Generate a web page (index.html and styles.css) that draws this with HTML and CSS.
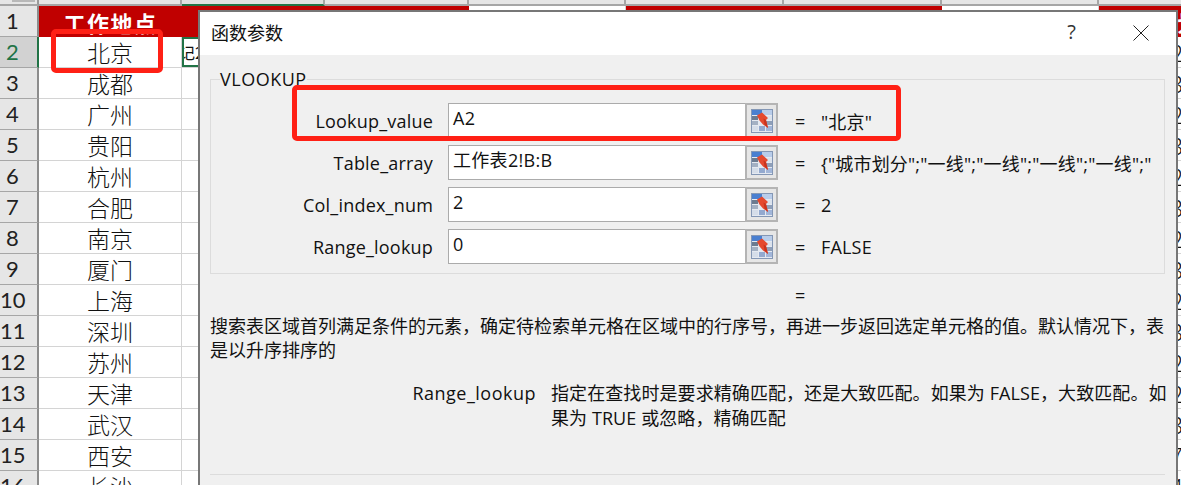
FILE: index.html
```html
<!DOCTYPE html>
<html lang="zh-CN">
<head>
<meta charset="utf-8">
<title>函数参数</title>
<link rel="stylesheet" href="styles.css">
</head>
<body>
<svg class="defs" width="0" height="0" aria-hidden="true">
  <symbol id="refedit" viewBox="0 0 22 24">
    <rect x="0" y="0" width="22" height="24" fill="#8497b5"/>
    <rect x="1" y="1" width="20" height="22" fill="#e4e9f1"/>
    <rect x="1" y="1" width="10" height="5" fill="#4a7fd0"/>
    <rect x="11" y="1" width="10" height="5" fill="#b9cdea"/>
    <rect x="1" y="7" width="6" height="4" fill="#6c7b90"/>
    <rect x="8" y="7" width="6" height="4" fill="#c9d2df"/>
    <rect x="15" y="7" width="6" height="4" fill="#dbe2ec"/>
    <rect x="1" y="12" width="6" height="4" fill="#a3b0c3"/>
    <rect x="15" y="12" width="6" height="4" fill="#8f9fb8"/>
    <rect x="1" y="17" width="6" height="5" fill="#d5dde9"/>
    <rect x="8" y="17" width="6" height="5" fill="#93a9cf"/>
    <rect x="15" y="17" width="6" height="5" fill="#a2b6d9"/>
    <path d="M6 6.500 L11 3.500 L17 9 L15 11 L17 19 L12 15.500 L8.500 11.500 Z" fill="#e5492f"/>
    <path d="M12.500 9.500 L15 11 L17 19 L13.500 15.500 Z" fill="#c9341f"/>
  </symbol>
</svg>

<table class="sheet">
  <colgroup>
    <col class="w-head"><col class="w-a"><col class="w-a"><col class="w-c"><col class="w-d"><col class="w-e"><col class="w-e"><col class="w-d"><col class="w-d">
  </colgroup>
  <tr class="col-heads">
    <th class="corner"><span class="corner-mark"></span></th>
    <th></th><th class="active"></th><th></th><th></th><th></th><th></th><th></th><th></th>
  </tr>
  <tr>
    <th class="num">1</th>
    <td class="title">工作地点</td><td class="title"></td><td class="title"></td><td></td><td class="title"></td><td class="title"></td><td></td><td class="title">城市划分</td>
  </tr>
  <tr><th class="num current">2</th><td>北京</td><td class="selected"><span class="formula">记2</span></td><td colspan="5"></td><td>2</td></tr>
  <tr><th class="num">3</th><td>成都</td><td></td><td colspan="5"></td><td>3</td></tr>
  <tr><th class="num">4</th><td>广州</td><td></td><td colspan="5"></td><td>2</td></tr>
  <tr><th class="num">5</th><td>贵阳</td><td></td><td colspan="5"></td><td>3</td></tr>
  <tr><th class="num">6</th><td>杭州</td><td></td><td colspan="5"></td><td>2</td></tr>
  <tr><th class="num">7</th><td>合肥</td><td></td><td colspan="5"></td><td>3</td></tr>
  <tr><th class="num">8</th><td>南京</td><td></td><td colspan="5"></td><td>2</td></tr>
  <tr><th class="num">9</th><td>厦门</td><td></td><td colspan="5"></td><td>3</td></tr>
  <tr><th class="num">10</th><td>上海</td><td></td><td colspan="5"></td><td>2</td></tr>
  <tr><th class="num">11</th><td>深圳</td><td></td><td colspan="5"></td><td>3</td></tr>
  <tr><th class="num">12</th><td>苏州</td><td></td><td colspan="5"></td><td>2</td></tr>
  <tr><th class="num">13</th><td>天津</td><td></td><td colspan="5"></td><td>2</td></tr>
  <tr><th class="num">14</th><td>武汉</td><td></td><td colspan="5"></td><td>3</td></tr>
  <tr><th class="num">15</th><td>西安</td><td></td><td colspan="5"></td><td>7</td></tr>
  <tr><th class="num">16</th><td>长沙</td><td></td><td colspan="5"></td><td>4</td></tr>
</table>

<section class="dialog">
  <header class="titlebar">
    <h1 class="dialog-title">函数参数</h1>
    <span class="help">?</span>
    <svg class="close" width="16" height="16" viewBox="0 0 16 16" aria-hidden="true"><path d="M0.500 0.500 L15.500 15.500 M15.500 0.500 L0.500 15.500" stroke="#222" stroke-width="1" fill="none"/></svg>
  </header>
  <div class="dialog-body">
    <fieldset class="args">
      <legend class="args-name">VLOOKUP</legend>
      <div class="arg">
        <label class="arg-label">Lookup_value</label>
        <div class="arg-input"><span class="field">A2</span><span class="ref-btn"><svg width="22" height="24"><use href="#refedit"/></svg></span></div>
        <span class="eq">=</span><span class="arg-result">"北京"</span>
      </div>
      <div class="arg">
        <label class="arg-label">Table_array</label>
        <div class="arg-input"><span class="field">工作表2!B:B</span><span class="ref-btn"><svg width="22" height="24"><use href="#refedit"/></svg></span></div>
        <span class="eq">=</span><span class="arg-result">{"城市划分";"一线";"一线";"一线";"一线";"</span>
      </div>
      <div class="arg">
        <label class="arg-label">Col_index_num</label>
        <div class="arg-input"><span class="field">2</span><span class="ref-btn"><svg width="22" height="24"><use href="#refedit"/></svg></span></div>
        <span class="eq">=</span><span class="arg-result">2</span>
      </div>
      <div class="arg">
        <label class="arg-label">Range_lookup</label>
        <div class="arg-input"><span class="field">0</span><span class="ref-btn"><svg width="22" height="24"><use href="#refedit"/></svg></span></div>
        <span class="eq">=</span><span class="arg-result">FALSE</span>
      </div>
    </fieldset>
    <div class="total-eq">=</div>
    <p class="summary">搜索表区域首列满足条件的元素，确定待检索单元格在区域中的行序号，再进一步返回选定单元格的值。默认情况下，表<br>是以升序排序的</p>
    <div class="arg-help">
      <span class="arg-help-name">Range_lookup</span>
      <p class="arg-help-text">指定在查找时是要求精确匹配，还是大致匹配。如果为 FALSE，大致匹配。如<br>果为 TRUE 或忽略，精确匹配</p>
    </div>
    <div class="separator"></div>
  </div>
</section>

<div class="mark mark-cell"></div>
<div class="mark mark-arg"></div>
</body>
</html>
```

FILE: styles.css
```css
html, body {
  margin: 0;
  height: 485px;
  overflow: hidden;
  background: #fff;
}

.defs { position: absolute; }

/* Worksheet */
.sheet {
  border-collapse: separate;
  border-spacing: 0;
  table-layout: fixed;
  width: 1256px;
  font-family: "Noto Sans CJK SC", sans-serif;
  font-weight: 300;
  color: #111;
}
.sheet col, .sheet th, .sheet td { box-sizing: border-box; }
.w-head { width: 39px; }
.w-a { width: 143px; }
.w-c { width: 144px; }
.w-d { width: 157px; }
.w-e { width: 158px; }

.sheet tr { height: 31px; }
.sheet td {
  padding: 0;
  height: 31px;
  font-size: 23px;
  line-height: 30px;
  text-align: center;
  white-space: nowrap;
  overflow: hidden;
  border-right: 1px solid #d4d4d4;
  border-bottom: 1px solid #d4d4d4;
}
.sheet tr.col-heads { height: 6px; }
.col-heads th {
  height: 6px;
  padding: 0;
  background: #e6e6e6;
  border-right: 2px solid #a6a6a6;
  border-bottom: 2px solid #a6a6a6;
}
.col-heads th.corner { border-right: 2px solid #9a9a9a; }
.corner-mark {
  display: block;
  width: 23px;
  height: 2px;
  margin: -2px 0 0 12px;
  background: #b8b8b8;
}
.col-heads th.active { border-bottom-color: #217346; background: #e0e0e0; }

.num {
  padding: 0 12px 0 0;
  height: 31px;
  background: #e6e6e6;
  font-family: Lato, sans-serif;
  font-weight: 400;
  font-size: 22px;
  line-height: 30px;
  color: #222;
  text-align: center;
  border-right: 2px solid #8c8c8c;
  border-bottom: 1px solid #a6a6a6;
}
.num.current {
  background: #d2d2d2;
  color: #217346;
  border-right-color: #217346;
}
.sheet td.title {
  background: #c00000;
  color: #fff;
  font-weight: 700;
  font-size: 22px;
  letter-spacing: 1.500px;
  line-height: 30px;
  border-right: 0;
  border-bottom: 0;
}
.sheet td.selected {
  text-align: left;
  box-shadow: inset 0 0 0 2px #217346;
  font-size: 16px;
  font-weight: 400;
}
.formula {
  display: block;
  margin-left: 2px;
  overflow: hidden;
  text-indent: -5px;
}

/* Dialog window */
.dialog {
  position: absolute;
  left: 198px;
  top: 10px;
  width: 976px;
  height: 500px;
  border: 2px solid #777;
  border-bottom: 0;
  background: #f0f0f0;
  font-family: "Open Sans", "Noto Sans CJK SC", sans-serif;
  font-size: 18px;
  color: #111;
}
.titlebar {
  display: flex;
  align-items: center;
  height: 43px;
  background: #fff;
  padding: 0 27px 0 11px;
}
.dialog-title {
  margin: -4px 0 0;
  flex: 1;
  font-size: 18px;
  font-weight: 400;
}
.help {
  font-size: 20px;
  color: #333;
  margin: -4px 57px 0 0;
}
.close { display: block; margin-top: -2px; }

.dialog-body { padding: 0 11px 0 10px; }

.args {
  margin: 14px 0 0;
  padding: 14px 0 9px;
  border: 1px solid #dcdcdc;
  min-width: 0;
}
.args-name {
  margin-left: 9px;
  padding: 0;
  font-size: 18px;
  line-height: 20px;
  letter-spacing: .5px;
}
.arg {
  display: grid;
  grid-template-columns: 222px 330px 27px 1fr;
  align-items: center;
  height: 35px;
  margin-bottom: 7px;
}
.arg:last-child { margin-bottom: 0; }
.arg-label { text-align: right; letter-spacing: .2px; }
.arg-input {
  display: flex;
  grid-column: 2;
  height: 35px;
  margin-left: 15px;
  margin-right: -15px;
}
.field {
  flex: 1;
  box-sizing: border-box;
  background: #fff;
  border: 1px solid #ababab;
  border-right: 0;
  padding: 0 4px;
  line-height: 28px;
  white-space: nowrap;
  letter-spacing: .3px;
}
.ref-btn {
  display: flex;
  align-items: center;
  justify-content: center;
  width: 33px;
  box-sizing: border-box;
  background: #e6e6e6;
  border: 2px solid #b4b4b4;
}
.eq { padding-left: 32px; }
.arg-result {
  padding-left: 16px;
  margin-left: 15px;
  white-space: nowrap;
  overflow: hidden;
  letter-spacing: .18px;
}
.total-eq {
  padding-left: 585px;
  margin-top: 9px;
  line-height: 24px;
}
.summary {
  margin: 7px 0 0;
  line-height: 24px;
  white-space: nowrap;
}
.arg-help {
  display: grid;
  grid-template-columns: 326px 1fr;
  column-gap: 15px;
  margin-top: 19px;
  line-height: 24.500px;
}
.arg-help-name { text-align: right; letter-spacing: .5px; }
.arg-help-text { margin: 0; white-space: nowrap; letter-spacing: .08px; }
.separator {
  margin-top: 44px;
  border-top: 1px solid #dcdcdc;
}

/* Hand-drawn red annotations */
.mark {
  position: absolute;
  box-sizing: border-box;
  border: 5px solid #ff2015;
  border-radius: 5px;
}
.mark-cell {
  left: 51px;
  top: 29px;
  width: 112px;
  height: 44px;
}
.mark-arg {
  left: 292px;
  top: 85px;
  width: 609px;
  height: 56px;
}
```
